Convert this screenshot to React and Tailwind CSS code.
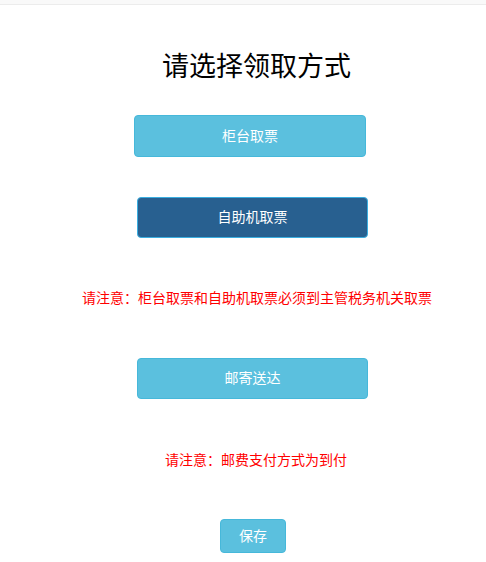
import React from "react";

const font = { fontFamily: '"Liberation Sans", "Noto Sans CJK SC", sans-serif' };

export default function App() {
  return (
    <div className="w-[486px] h-[562px] bg-white overflow-hidden" style={font}>
      <div className="h-[5px] bg-[#f9f9f9] border-b border-[#ececec]" />

      <div className="flex justify-center pl-[27px] mt-[43px]">
        <h1 className="text-[27px] leading-[39px] text-black font-normal">请选择领取方式</h1>
      </div>

      <div className="flex flex-col pt-[28px]">
        <button className="ml-[134px] w-[232px] h-[42px] bg-[#5bc0de] border border-[#46b8da] rounded-[4px] text-white text-[14px]">
          柜台取票
        </button>
        <button className="ml-[137px] mt-[40px] w-[231px] h-[41px] bg-[#286090] border border-[#3aaee0] rounded-[4px] text-white text-[14px]">
          自助机取票
        </button>
        <div className="flex justify-center pl-[28px] mt-[50px]">
          <p className="text-[14px] leading-[20px] text-[#ff0000]">请注意：柜台取票和自助机取票必须到主管税务机关取票</p>
        </div>
        <button className="ml-[137px] mt-[50px] w-[231px] h-[41px] bg-[#5bc0de] border border-[#46b8da] rounded-[4px] text-white text-[14px]">
          邮寄送达
        </button>
        <div className="flex justify-center pl-[26px] mt-[51px]">
          <p className="text-[14px] leading-[20px] text-[#ff0000]">请注意：邮费支付方式为到付</p>
        </div>
        <button className="ml-[220px] mt-[49px] w-[66px] h-[34px] bg-[#5bc0de] border border-[#46b8da] rounded-[4px] text-white text-[14px]">
          保存
        </button>
      </div>
    </div>
  );
}
